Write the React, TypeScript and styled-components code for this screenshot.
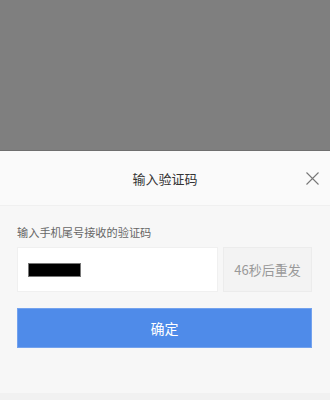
import React from "react";
import styled, { createGlobalStyle } from "styled-components";

const Global = createGlobalStyle`
  html, body { margin: 0; padding: 0; }
  body { font-family: "Noto Sans CJK SC", "Noto Sans", sans-serif; background: #808080; }
`;

const Page = styled.div`
  width: 330px;
  height: 400px;
  display: flex;
  flex-direction: column;
  background: #808080;
  overflow: hidden;
`;

const Mask = styled.div`
  height: 151px;
  flex: none;
  background: #7f7f7f;
  border-bottom: 1px solid #6f6f6f;
  box-sizing: border-box;
`;

const Sheet = styled.div`
  flex: 1;
  display: flex;
  flex-direction: column;
  background: #f7f7f7;
`;

const Header = styled.div`
  height: 55px;
  flex: none;
  position: relative;
  display: flex;
  align-items: center;
  justify-content: center;
  background: #fafafa;
  border-bottom: 1px solid #f0f0f0;
  box-sizing: border-box;
`;

const Title = styled.div`
  font-size: 13px;
  color: #333;
`;

const Close = styled.button`
  position: absolute;
  right: 11px;
  top: 21px;
  width: 13px;
  height: 13px;
  padding: 0;
  border: 0;
  background: none;
  display: block;
`;

const Body = styled.div`
  flex: 1;
  padding: 18px 18px 0 17px;
  display: flex;
  flex-direction: column;
`;

const Label = styled.div`
  font-size: 11.2px;
  color: #666;
  line-height: 16px;
  height: 16px;
`;

const Row = styled.div`
  margin-top: 7px;
  display: flex;
  gap: 5px;
  height: 45px;
`;

const InputBox = styled.div`
  flex: 1;
  background: #fff;
  border: 1px solid #f0f0f0;
  box-sizing: border-box;
  display: flex;
  align-items: center;
  padding-left: 10px;
`;

const Redact = styled.div`
  width: 53px;
  height: 14px;
  background: #000;
  border: 1px solid #777;
  box-sizing: border-box;
`;

const Resend = styled.div`
  width: 89px;
  flex: none;
  background: #f3f3f3;
  border: 1px solid #ececec;
  box-sizing: border-box;
  display: flex;
  align-items: center;
  justify-content: center;
  font-size: 13px;
  color: #999;
`;

const Confirm = styled.button`
  margin-top: 16px;
  height: 40px;
  width: 295px;
  background: #4f8be9;
  border: 1px solid #73a2ee;
  box-sizing: border-box;
  color: #fff;
  font-size: 14px;
  font-family: "Noto Sans CJK SC", sans-serif;
  padding: 0;
`;

const Footer = styled.div`
  height: 7px;
  flex: none;
  background: #f1f1f1;
`;

export default function App() {
  return (
    <>
      <Global />
      <Page>
        <Mask />
        <Sheet>
          <Header>
            <Title>输入验证码</Title>
            <Close aria-label="close">
              <svg width="13" height="13" viewBox="0 0 13 13">
                <path d="M0.5 0.5L12.5 12.5M12.5 0.5L0.5 12.5" stroke="#777" strokeWidth="1.1" fill="none" />
              </svg>
            </Close>
          </Header>
          <Body>
            <Label>输入手机尾号接收的验证码</Label>
            <Row>
              <InputBox>
                <Redact />
              </InputBox>
              <Resend>46秒后重发</Resend>
            </Row>
            <Confirm>确定</Confirm>
          </Body>
          <Footer />
        </Sheet>
      </Page>
    </>
  );
}
